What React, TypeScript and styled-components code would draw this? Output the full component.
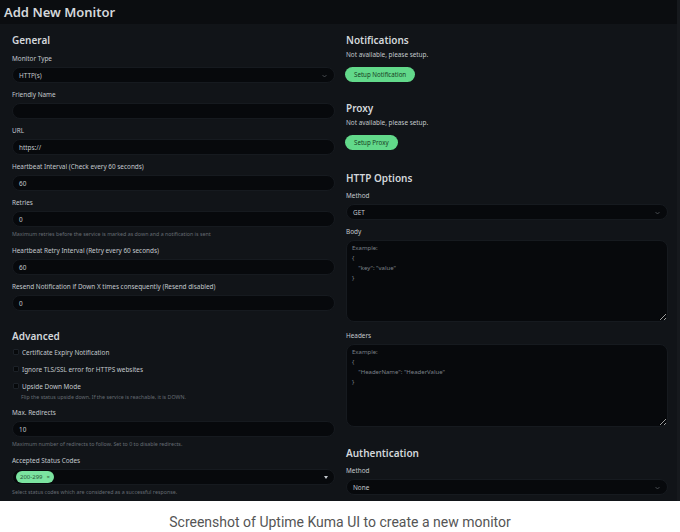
import React from "react";
import styled, { createGlobalStyle } from "styled-components";

const Global = createGlobalStyle`
  html, body { margin: 0; padding: 0; background: #ffffff; }
  * { box-sizing: border-box; }
`;

const Page = styled.div`
  width: 680px;
  height: 532px;
  background: #ffffff;
  display: flex;
  flex-direction: column;
`;

const Screen = styled.div`
  height: 501px;
  background: #0b0d10;
  display: flex;
  flex-direction: column;
  border-right: 3px solid #16191d;
  overflow: hidden;
  font-family: "Noto Sans", "Open Sans", sans-serif;
`;

const TopBar = styled.div`
  height: 24px;
  flex: none;
  padding: 2px 0 0 4px;
  display: flex;
  align-items: flex-start;
`;

const Title = styled.h1`
  margin: 0;
  font-size: 13px;
  line-height: 20px;
  font-weight: 600;
  color: #d3d7db;
`;

const Card = styled.div`
  flex: 1;
  background: #111418;
  display: grid;
  grid-template-columns: 323px 322px;
  column-gap: 11px;
  padding: 10px 9px 0 12px;
`;

const Column = styled.div`
  display: flex;
  flex-direction: column;
`;

const Heading = styled.h2<{ $top?: number; $bottom?: number }>`
  margin: ${(p) => p.$top ?? 0}px 0 ${(p) => p.$bottom ?? 6}px 0;
  font-size: 10px;
  line-height: 13px;
  font-weight: 600;
  color: #d3d7db;
`;

const Group = styled.div<{ $gap?: number }>`
  display: flex;
  flex-direction: column;
  margin-bottom: ${(p) => p.$gap ?? 7}px;
`;

const Label = styled.div`
  font-size: 6.4px;
  line-height: 10px;
  color: #c3c8cd;
  margin-bottom: 3px;
`;

const Field = styled.div`
  height: 16px;
  border-radius: 8px;
  background: #07090c;
  border: 1px solid #161a1f;
  display: flex;
  align-items: center;
  padding: 0 6px;
  font-size: 6.4px;
  color: #c3c8cd;
  position: relative;
`;

const Chevron = styled.svg`
  position: absolute;
  right: 7px;
  top: 5.5px;
  width: 5px;
  height: 4px;
`;

const Caret = styled.div`
  position: absolute;
  right: 6px;
  top: 6px;
  width: 0;
  height: 0;
  border-left: 2.5px solid transparent;
  border-right: 2.5px solid transparent;
  border-top: 3px solid #c3c8cd;
`;

const Help = styled.div`
  font-size: 5.3px;
  line-height: 9px;
  color: #666c73;
  margin-top: 3px;
`;

const SubHelp = styled.div`
  font-size: 5.3px;
  line-height: 9px;
  color: #666c73;
  padding-left: 9px;
  margin-top: 2px;
`;

const CheckRow = styled.label`
  display: flex;
  align-items: center;
  gap: 3px;
  height: 10px;
  font-size: 6.4px;
  color: #c3c8cd;
`;

const CheckList = styled.div`
  display: flex;
  flex-direction: column;
  gap: 7px;
  margin-bottom: 6px;
`;

const Box = styled.span`
  width: 6px;
  height: 6px;
  border-radius: 1px;
  background: #07090b;
  border: 1px solid #1c2127;
  margin-left: 1px;
`;

const Tag = styled.span`
  display: inline-flex;
  align-items: center;
  gap: 4px;
  height: 12px;
  padding: 0 4px;
  margin-left: -3px;
  border-radius: 6px;
  background: #7be3a0;
  color: #2a5a3a;
  font-size: 6px;
`;

const Text = styled.div`
  font-size: 6.4px;
  line-height: 10px;
  color: #c3c8cd;
  margin-bottom: 7px;
`;

const GreenButton = styled.button`
  align-self: flex-start;
  height: 15px;
  padding: 0 9px;
  border: none;
  border-radius: 8px;
  background: #62d98a;
  color: #173b24;
  font-family: "Noto Sans", "Open Sans", sans-serif;
  font-size: 6.2px;
  margin-left: -1px;
`;

const Area = styled.textarea<{ $h: number }>`
  height: ${(p) => p.$h}px;
  width: 100%;
  resize: vertical;
  background: #07090c;
  border: 1px solid #161a1f;
  border-radius: 8px;
  padding: 2px 5px;
  font-family: "Noto Sans", "Open Sans", sans-serif;
  font-size: 6px;
  line-height: 10px;
  color: #c3c8cd;
  outline: none;
  &::placeholder { color: #7b8189; }
`;

const Caption = styled.div`
  flex: 1;
  display: flex;
  align-items: center;
  justify-content: center;
  padding-top: 11px;
  font-family: Roboto, "Liberation Sans", sans-serif;
  font-size: 14px;
  color: #555555;
`;

const Select = ({ value }: { value: string }) => (
  <Field>
    {value}
    <Chevron viewBox="0 0 10 6">
      <path d="M1 1 L5 5 L9 1" stroke="#5f656c" strokeWidth="1.4" fill="none" />
    </Chevron>
  </Field>
);

const Input = ({ label, value, help }: { label: string; value?: string; help?: string }) => (
  <Group>
    <Label>{label}</Label>
    <Field>{value}</Field>
    {help && <Help>{help}</Help>}
  </Group>
);

export default function App() {
  return (
    <Page>
      <Global />
      <Screen>
        <TopBar>
          <Title>Add New Monitor</Title>
        </TopBar>
        <Card>
          <Column>
            <Heading $bottom={7}>General</Heading>
            <Group>
              <Label>Monitor Type</Label>
              <Select value="HTTP(s)" />
            </Group>
            <Input label="Friendly Name" />
            <Input label="URL" value="https://" />
            <Input label="Heartbeat Interval (Check every 60 seconds)" value="60" />
            <Input
              label="Retries"
              value="0"
              help="Maximum retries before the service is marked as down and a notification is sent"
            />
            <Input label="Heartbeat Retry Interval (Retry every 60 seconds)" value="60" />
            <Input label="Resend Notification if Down X times consequently (Resend disabled)" value="0" />

            <Heading $top={12} $bottom={4}>Advanced</Heading>
            <CheckList>
              <CheckRow>
                <Box />
                Certificate Expiry Notification
              </CheckRow>
              <CheckRow>
                <Box />
                Ignore TLS/SSL error for HTTPS websites
              </CheckRow>
              <div>
                <CheckRow>
                  <Box />
                  Upside Down Mode
                </CheckRow>
                <SubHelp>Flip the status upside down. If the service is reachable, it is DOWN.</SubHelp>
              </div>
            </CheckList>
            <Input
              label="Max. Redirects"
              value="10"
              help="Maximum number of redirects to follow. Set to 0 to disable redirects."
            />
            <Group>
              <Label>Accepted Status Codes</Label>
              <Field>
                <Tag>
                  200-299 <span>×</span>
                </Tag>
                <Caret />
              </Field>
              <Help>Select status codes which are considered as a successful response.</Help>
            </Group>
          </Column>

          <Column>
            <Heading $bottom={3}>Notifications</Heading>
            <Text>Not available, please setup.</Text>
            <GreenButton>Setup Notification</GreenButton>

            <Heading $top={20} $bottom={3}>Proxy</Heading>
            <Text>Not available, please setup.</Text>
            <GreenButton>Setup Proxy</GreenButton>

            <Heading $top={22}>HTTP Options</Heading>
            <Group>
              <Label>Method</Label>
              <Select value="GET" />
            </Group>
            <Group $gap={9}>
              <Label>Body</Label>
              <Area $h={82} placeholder={'Example:\n{\n    "key": "value"\n}'} />
            </Group>
            <Group>
              <Label>Headers</Label>
              <Area $h={83} placeholder={'Example:\n{\n    "HeaderName": "HeaderValue"\n}'} />
            </Group>

            <Heading $top={13}>Authentication</Heading>
            <Group>
              <Label>Method</Label>
              <Select value="None" />
            </Group>
          </Column>
        </Card>
      </Screen>
      <Caption>Screenshot of Uptime Kuma UI to create a new monitor</Caption>
    </Page>
  );
}
